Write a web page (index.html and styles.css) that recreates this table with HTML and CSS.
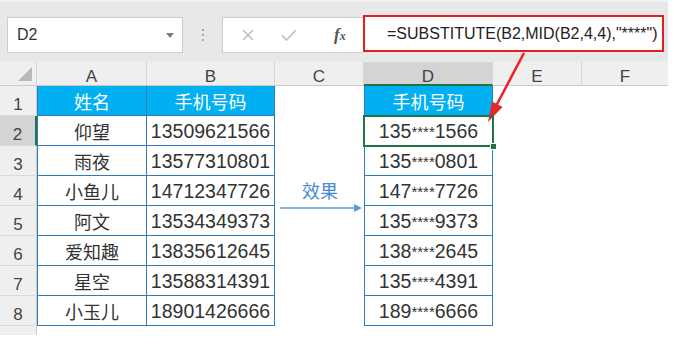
FILE: index.html
```html
<!DOCTYPE html>
<html>
<head>
<meta charset="utf-8">
<link rel="stylesheet" href="styles.css">
</head>
<body>
<div class="screen">
  <div class="toolbar">
    <div class="namebox"><span class="nb-text">D2</span><span class="nb-drop"></span></div>
    <div class="sep"><span></span><span></span><span></span></div>
    <div class="fxbox">
      <svg class="ico-x" width="12" height="12" viewBox="0 0 12 12"><path d="M1 1L11 11M11 1L1 11" stroke="#bdbdbd" stroke-width="1.6" fill="none"/></svg>
      <svg class="ico-ok" width="16" height="12" viewBox="0 0 16 12"><path d="M1 6.5L5.5 11L15 1" stroke="#c4c4c4" stroke-width="1.8" fill="none"/></svg>
      <span class="fx"><i>f</i><span class="fx-x">x</span></span>
    </div>
    <div class="formula">=SUBSTITUTE(B2,MID(B2,4,4),"****")</div>
  </div>

  <div class="sheet">
    <div class="ch corner"><svg width="16" height="16" viewBox="0 0 16 16"><path d="M15 1V15H1Z" fill="#b9b9b9"/></svg></div>
    <div class="ch">A</div>
    <div class="ch">B</div>
    <div class="ch">C</div>
    <div class="ch sel">D</div>
    <div class="ch">E</div>
    <div class="ch last">F</div>

    <div class="rh">1</div>
    <div class="cell ca th cjk">姓名</div>
    <div class="cell cb th cjk">手机号码</div>
    <div class="blank"></div>
    <div class="cell cd th cjk">手机号码</div>
    <div class="blank"></div>
    <div class="blank"></div>

    <div class="rh sel">2</div>
    <div class="cell ca cjk">仰望</div>
    <div class="cell cb num">13509621566</div>
    <div class="blank"></div>
    <div class="cell cd num active">135<span class="star">****</span>1566<span class="handle"></span></div>
    <div class="blank"></div>
    <div class="blank"></div>

    <div class="rh">3</div>
    <div class="cell ca cjk">雨夜</div>
    <div class="cell cb num">13577310801</div>
    <div class="blank"></div>
    <div class="cell cd num">135<span class="star">****</span>0801</div>
    <div class="blank"></div>
    <div class="blank"></div>

    <div class="rh">4</div>
    <div class="cell ca cjk">小鱼儿</div>
    <div class="cell cb num">14712347726</div>
    <div class="effect">
      <span class="effect-text">效果</span>
      <svg class="effect-arrow" width="84" height="10" viewBox="0 0 84 10"><path d="M0 5H76" stroke="#5b9bd5" stroke-width="1.6"/><path d="M74 1L82 5L74 9Z" fill="#5b9bd5"/></svg>
    </div>
    <div class="cell cd num">147<span class="star">****</span>7726</div>
    <div class="blank"></div>
    <div class="blank"></div>

    <div class="rh">5</div>
    <div class="cell ca cjk">阿文</div>
    <div class="cell cb num">13534349373</div>
    <div class="cell cd num">135<span class="star">****</span>9373</div>
    <div class="blank"></div>
    <div class="blank"></div>

    <div class="rh">6</div>
    <div class="cell ca cjk">爱知趣</div>
    <div class="cell cb num">13835612645</div>
    <div class="blank"></div>
    <div class="cell cd num">138<span class="star">****</span>2645</div>
    <div class="blank"></div>
    <div class="blank"></div>

    <div class="rh">7</div>
    <div class="cell ca cjk">星空</div>
    <div class="cell cb num">13588314391</div>
    <div class="blank"></div>
    <div class="cell cd num">135<span class="star">****</span>4391</div>
    <div class="blank"></div>
    <div class="blank"></div>

    <div class="rh">8</div>
    <div class="cell ca cjk">小玉儿</div>
    <div class="cell cb num">18901426666</div>
    <div class="blank"></div>
    <div class="cell cd num">189<span class="star">****</span>6666</div>
    <div class="blank"></div>
    <div class="blank"></div>

    <div class="rh tail"></div>
  </div>

  <svg class="red-arrow" width="674" height="346" viewBox="0 0 674 346">
    <path d="M524 53L496 106" stroke="#e8262a" stroke-width="2.6" fill="none"/>
    <path d="M488 122L492 101.5L502.6 107.1Z" fill="#e8262a"/>
  </svg>
</div>
</body>
</html>
```

FILE: styles.css
```css
* { box-sizing: border-box; }
html, body { margin: 0; padding: 0; background: #ffffff; }
body { width: 674px; height: 346px; overflow: hidden; font-family: "Liberation Sans", Arial, sans-serif; }

.screen { position: relative; width: 674px; height: 346px; }

.toolbar {
  width: 668px;
  height: 62px;
  background: #e8e8e8;
  border-top: 2px solid #f2f2f2;
  display: flex;
  align-items: flex-start;
  padding-left: 7px;
}

.namebox {
  margin-top: 15px;
  width: 176px;
  height: 36px;
  background: #ffffff;
  border: 1px solid #cdcdcd;
  display: flex;
  align-items: center;
  justify-content: space-between;
  padding: 0 8px 0 9px;
}
.nb-text { font-size: 16px; color: #333; }
.nb-drop {
  width: 0; height: 0;
  border-left: 4.5px solid transparent;
  border-right: 4.5px solid transparent;
  border-top: 5px solid #7a7a7a;
}

.sep {
  width: 39px;
  height: 36px;
  margin-top: 15px;
  display: flex;
  flex-direction: column;
  align-items: center;
  justify-content: center;
  gap: 3px;
}
.sep span { width: 2px; height: 2px; background: #a9a9a9; }

.fxbox {
  margin-top: 15px;
  width: 141px;
  height: 36px;
  background: #ffffff;
  border: 1px solid #cdcdcd;
  border-right: none;
  display: flex;
  align-items: center;
  padding-left: 19px;
}
.ico-x { margin-right: 27px; }
.ico-ok { margin-right: 37px; }
.fx { font-family: "Liberation Serif", serif; font-size: 17px; color: #555; }
.fx i { font-style: italic; font-weight: bold; }
.fx-x { font-style: italic; font-size: 12px; font-weight: bold; }

.formula {
  margin-top: 13px;
  width: 301px;
  height: 37px;
  background: #ffffff;
  border: 2px solid #e0201e;
  font-size: 16px;
  color: #222;
  line-height: 33px;
  padding-left: 22px;
  white-space: nowrap;
}

.sheet {
  display: grid;
  width: 668px;
  grid-template-columns: 37px 110px 128px 89px 129px 89px 86px;
  grid-template-rows: 24px repeat(8, 30px) 9px;
}

.ch {
  background: #efefef;
  border-right: 1px solid #d6d6d6;
  border-bottom: 1px solid #cacaca;
  display: flex;
  align-items: flex-end;
  justify-content: center;
  font-size: 17px;
  line-height: 14px;
  color: #444;
  padding-bottom: 1px;
}
.ch.corner { align-items: flex-end; justify-content: flex-end; padding: 0 3px 3px 0; }
.ch.sel { background: #d4d4d4; border-bottom: 2px solid #217346; padding-bottom: 0; }
.ch.last { border-right: none; }

.rh {
  background: #efefef;
  border-right: 1px solid #cacaca;
  border-bottom: 1px solid #dadada;
  display: flex;
  align-items: flex-end;
  justify-content: center;
  font-size: 17px;
  line-height: 16px;
  color: #444;
  padding-bottom: 2px;
}
.rh.sel { background: #d4d4d4; border-right: 2px solid #217346; }
.rh.tail { border-bottom: none; }

.blank { background: #ffffff; }

.cell {
  display: flex;
  align-items: center;
  justify-content: center;
  border-bottom: 1px solid #2f7bbd;
  border-right: 1px solid #2f7bbd;
  color: #333;
  white-space: nowrap;
  position: relative;
}
.ca, .cd { border-left: 1px solid #2f7bbd; }
.th { background: #00b0f0; color: #ffffff; }
.cjk { font-family: "Noto Sans CJK SC", sans-serif; font-size: 18px; }
.th.cjk { font-size: 18px; }
.num { font-family: "Liberation Sans", Arial, sans-serif; font-size: 19.5px; padding-top: 2px; }
.star { font-size: 15px; }

.active {
  outline: 2px solid #217346;
  outline-offset: -1px;
  z-index: 1;
}
.handle {
  position: absolute;
  right: -5px;
  bottom: -5px;
  width: 7px;
  height: 7px;
  background: #217346;
  border: 1px solid #ffffff;
}

.effect {
  grid-row: span 2;
  display: flex;
  flex-direction: column;
  align-items: flex-start;
  padding-top: 4px;
}
.effect-text {
  font-family: "Noto Sans CJK SC", sans-serif;
  font-size: 18px;
  line-height: 20px;
  color: #4a8ad0;
  margin-left: 27px;
}
.effect-arrow { margin-top: 3px; margin-left: 5px; }

.red-arrow { position: absolute; left: 0; top: 0; pointer-events: none; }
```
